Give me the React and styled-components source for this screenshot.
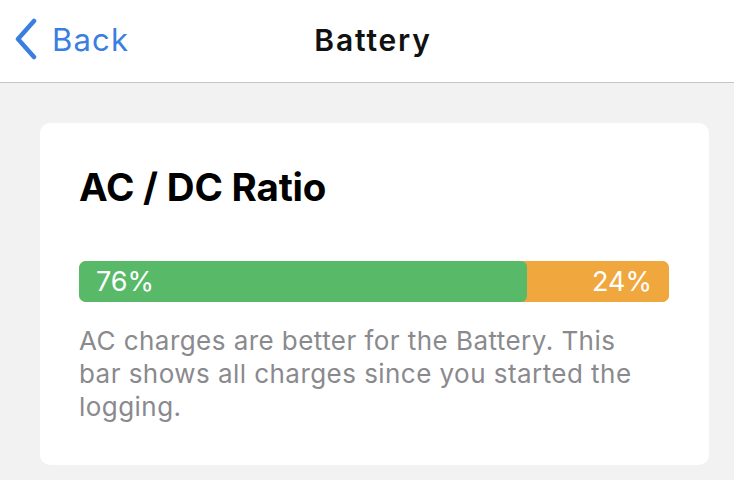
import React from "react";
import styled, { createGlobalStyle } from "styled-components";

const GlobalStyle = createGlobalStyle`
  html, body {
    margin: 0;
    padding: 0;
    background: #f2f2f2;
    font-family: Inter, "Noto Sans", "Liberation Sans", sans-serif;
  }
`;

function App() {
  const ac = 76;
  const dc = 24;
  return (
    <Page>
      <GlobalStyle />
      <Header>
        <BackButton>
          <svg width="26" height="42" viewBox="0 0 26 42" fill="none">
            <path
              d="M22 3 L6 21 L22 39"
              stroke="#3a7ee0"
              strokeWidth="4.5"
              strokeLinecap="round"
              strokeLinejoin="round"
            />
          </svg>
          <BackLabel>Back</BackLabel>
        </BackButton>
        <Title>Battery</Title>
      </Header>
      <Content>
        <Card>
          <CardTitle>AC / DC Ratio</CardTitle>
          <Bar>
            <Segment color="#58b968" style={{ width: ac + "%" }} align="left">
              {ac}%
            </Segment>
            <Segment color="#f0a73d" style={{ width: dc + "%" }} align="right">
              {dc}%
            </Segment>
          </Bar>
          <Note>
            AC charges are better for the Battery. This bar shows all charges
            since you started the logging.
          </Note>
        </Card>
      </Content>
    </Page>
  );
}

export default App;

const Page = styled.div`
  min-height: 480px;
  background: #f2f2f2;
`;

const Header = styled.div`
  position: relative;
  height: 82px;
  background: #ffffff;
  border-bottom: 1px solid #c6c6c8;
  display: flex;
  align-items: center;
  justify-content: center;
`;

const BackButton = styled.div`
  position: absolute;
  left: 12px;
  top: 18px;
  display: flex;
  align-items: center;
  gap: 14px;
  color: #3a7ee0;
`;

const BackLabel = styled.span`
  font-size: 31px;
  font-weight: 400;
  letter-spacing: 1.2px;
`;

const Title = styled.div`
  font-size: 30px;
  font-weight: 600;
  color: #111;
  letter-spacing: 1.8px;
  margin-top: -2px;
  margin-left: 12px;
`;

const Content = styled.div`
  padding: 40px 25px 16px 40px;
`;

const Card = styled.div`
  background: #ffffff;
  border-radius: 10px;
  padding: 40px 40px 42px 39px;
`;

const CardTitle = styled.h1`
  margin: 0 0 50px 0;
  font-size: 38.5px;
  font-weight: 700;
  color: #000;
  letter-spacing: -0.2px;
  line-height: 48px;
`;

const Bar = styled.div`
  display: flex;
  height: 41px;
  border-radius: 7px;
  overflow: hidden;
  background: #f0a73d;
`;

const Segment = styled.div`
  background: ${(p) => p.color};
  display: flex;
  align-items: center;
  justify-content: ${(p) => (p.align === "right" ? "flex-end" : "flex-start")};
  padding: 0 17px;
  box-sizing: border-box;
  color: #ffffff;
  font-size: 27px;
  font-weight: 400;
  border-radius: ${(p) => (p.align === "left" ? "0 6px 6px 0" : "0")};
`;

const Note = styled.p`
  margin: 22px 0 0 0;
  max-width: 570px;
  font-size: 26px;
  line-height: 33px;
  color: #8a8a8e;
  letter-spacing: 0.45px;
`;
